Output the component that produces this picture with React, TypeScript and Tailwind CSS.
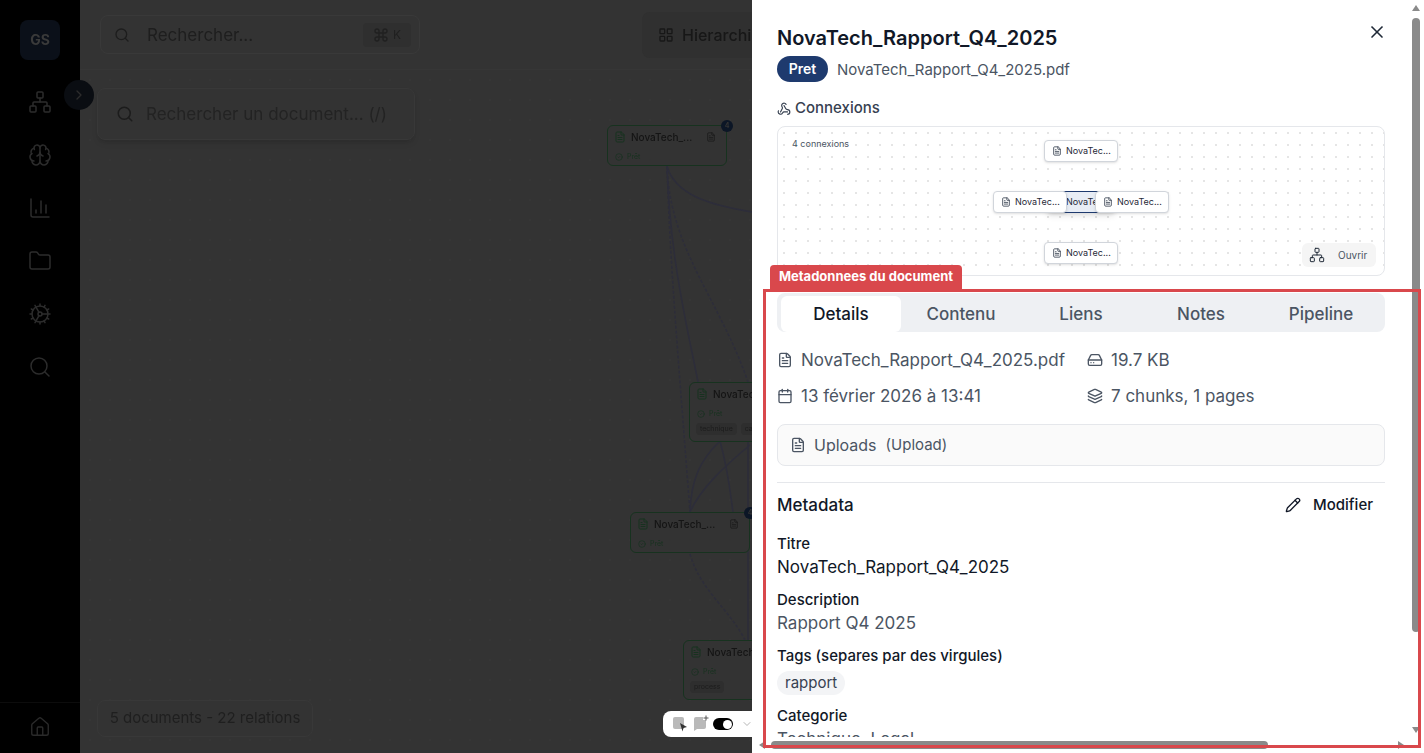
import { Brain, Calendar, ChartColumn, ChevronDown, ChevronRight, CircleCheck, Cog, Command, FileText, Folder, HardDrive, House, Layers, LayoutGrid, Network, Pencil, Search, Webhook, X } from "lucide-react"

const NAV_ICONS = [Network, Brain, ChartColumn, Folder, Cog, Search]
const TABS = ["Details", "Contenu", "Liens", "Notes", "Pipeline"]

function GraphNode({ className, tags, count }: { className: string; tags?: string[]; count?: boolean }) {
  return (
    <div className={`absolute w-[120px] rounded-md border-[1.5px] border-[#17321f] bg-[#333333] pb-[2px] pl-[6px] pr-[10px] pt-[3px] ${className}`}>
      <div className="flex h-4 items-center gap-[5px]">
        <FileText size={12} className="shrink-0 text-[#17321f]" />
        <span className="text-[10px] font-medium whitespace-nowrap text-[#141414]">NovaTech_...</span>
        <FileText size={10} className="ml-auto shrink-0 text-[#1c1c1c]" />
      </div>
      <div className="mt-[7px] flex items-center gap-1 pl-[1px] text-[7px] text-[#17321f]">
        <CircleCheck size={8} />
        <span>Prêt</span>
      </div>
      {tags && (
        <div className="mb-[4px] mt-[3px] flex gap-1">
          {tags.map(t => (
            <span key={t} className="rounded bg-[#2e2e2e] px-1 py-[1px] text-[7px] text-[#1c1c1c]">{t}</span>
          ))}
        </div>
      )}
      {count && (
        <span className="absolute -right-[7px] -top-[6px] flex h-3 w-3 items-center justify-center rounded-full bg-[#0c1626] text-[7px] font-bold text-[#333333]">4</span>
      )}
    </div>
  )
}

function MiniNode({ className }: { className: string }) {
  return (
    <div className={`absolute flex h-[22px] w-[74px] items-center gap-1 rounded border border-[#d1d5db] bg-white pl-[7px] shadow-sm ${className}`}>
      <FileText size={10} className="shrink-0 text-[#374151]" />
      <span className="text-[9px] text-[#1f2937]">NovaTec...</span>
    </div>
  )
}

function Field({ label, children, className = "mt-[10px]" }: { label: string; children: React.ReactNode; className?: string }) {
  return (
    <div className={className}>
      <div className="pt-px text-[15px] leading-5 font-medium text-[#111827]">{label}</div>
      <div className="mt-px">{children}</div>
    </div>
  )
}

function Background() {
  return (
    <div className="flex h-full w-[752px] shrink-0 blur-[0.6px]">
      <aside className="flex w-20 shrink-0 flex-col items-center bg-black">
        <div className="mt-5 flex h-10 w-10 items-center justify-center rounded-lg bg-[#0b1019] text-sm font-bold text-[#3a3a3a]">GS</div>
        <nav className="mt-[30px] flex flex-col gap-[29px]">
          {NAV_ICONS.map((Icon, i) => (
            <Icon key={i} size={24} strokeWidth={1.5} className="text-[#2c2c2c]" />
          ))}
        </nav>
        <div className="mt-auto flex h-[51px] w-full justify-center border-t border-[#0c0c0c] pt-[13px]">
          <House size={22} strokeWidth={1.5} className="text-[#2a2a2a]" />
        </div>
      </aside>

      <main className="relative min-w-0 flex-1 overflow-hidden bg-[#333333]">
        <header className="flex h-[70px] items-center border-b border-[#363636] pl-5">
          <div className="flex h-[39px] w-[320px] shrink-0 items-center rounded-lg border border-[#393939] pl-[13px] pr-2">
            <Search size={16} className="text-[#1d1d1d]" />
            <span className="ml-[17px] mt-[2px] text-[17px] text-[#1e1e1e]">Rechercher...</span>
            <span className="ml-auto flex h-6 w-12 items-center justify-center gap-1 rounded bg-[#2f2f2f] text-xs text-[#202020]">
              <Command size={16} />K
            </span>
          </div>
          <div className="ml-[222px] flex h-[46px] w-[200px] shrink-0 items-center gap-2 rounded-lg bg-[#303030] pl-[16px] text-base font-medium text-[#171717]">
            <LayoutGrid size={16} />
            Hierarchie
          </div>
        </header>

        <div className="absolute inset-x-0 bottom-0 top-[70px] bg-[radial-gradient(#363636_1px,transparent_1px)] bg-[size:20px_20px]" />

        <svg className="absolute inset-0" width="672" height="753" fill="none" stroke="#2d2d3a" strokeWidth="1.5">
          <path d="M587 166 C595 195 630 205 672 212" />
          <path d="M587 166 C590 250 640 300 668 382" strokeDasharray="3 2" />
          <path d="M587 166 C590 260 596 330 610 512" strokeDasharray="3 2" />
          <path d="M587 166 C590 260 608 330 618 382" />
          <path d="M640 441 C620 460 611 480 610 512" />
          <path d="M640 441 C648 470 650 490 653 512" />
          <path d="M670 445 C640 470 620 490 610 512" />
          <path d="M668 441 L668 640" />
          <path d="M610 554 C620 590 650 610 665 640" strokeDasharray="3 2" />
        </svg>

        <GraphNode className="left-[527px] top-[125px]" count />
        <GraphNode className="left-[609px] top-[382px]" tags={["technique", "cadre"]} />
        <GraphNode className="left-[550px] top-[512px]" count />
        <GraphNode className="left-[603px] top-[640px]" tags={["process"]} />

        <div className="absolute left-[17px] top-[88px] flex h-[52px] w-[318px] items-center rounded-lg border border-[#383838] bg-[#333333] pl-[18px] shadow-md">
          <Search size={18} className="text-[#1c1c1c]" />
          <span className="ml-[12px] mt-[2px] text-[17px] text-[#232323]">Rechercher un document... (/)</span>
        </div>

        <div className="absolute bottom-4 left-[17px] flex h-[37px] w-[216px] items-center justify-center rounded-lg border border-[#383838] bg-[#333333] text-[15px] text-[#1f1f1f]">
          5 documents - 22 relations
        </div>
      </main>
    </div>
  )
}

function DetailPanel() {
  return (
    <section className="relative h-full w-[672px] shrink-0 bg-white">
      <div className="h-[737px] overflow-hidden pl-[25px] pr-[39px] pt-[23px]">
        <h2 className="pt-px text-xl leading-7 font-semibold text-[#111827]">NovaTech_Rapport_Q4_2025</h2>
        <div className="mt-[4px] flex items-center gap-[9px]">
          <span className="flex h-[26px] w-[51px] items-center justify-center rounded-full bg-[#1e3a6e] text-sm font-semibold text-white">Pret</span>
          <span className="mt-[2px] text-[15px] text-[#4b5563]">NovaTech_Rapport_Q4_2025.pdf</span>
        </div>

        <div className="mt-4 flex h-5 items-center gap-1 pt-px text-[15px] font-medium text-[#374151]">
          <Webhook size={14} />
          Connexions
        </div>

        <div className="relative mt-2 h-[150px] overflow-hidden rounded-lg border border-[#e5e7eb] bg-white bg-[radial-gradient(#e5e5e5_1px,transparent_1px)] bg-[size:12px_12px]">
          <span className="absolute left-[14px] top-[10px] text-[9px] text-[#4b5563]">4 connexions</span>
          <MiniNode className="left-[266px] top-[13px]" />
          <div className="absolute left-[268px] top-[64px] flex h-[22px] w-[70px] items-center gap-[2px] overflow-hidden rounded border border-[#1e3a6e] bg-[#e8edf5] pl-[7px] shadow-md">
            <FileText size={10} className="shrink-0 text-[#374151]" />
            <span className="text-[9px] whitespace-nowrap text-[#1f2937]">NovaTech_R</span>
          </div>
          <MiniNode className="left-[215px] top-[64px]" />
          <MiniNode className="left-[317px] top-[64px]" />
          <MiniNode className="left-[266px] top-[115px]" />
          <div className="absolute bottom-2 right-2 flex h-6 w-[74px] items-center rounded-md bg-[#f5f5f5] pl-[7px] text-[10px] text-[#4b5563]">
            <Network size={16} strokeWidth={1.5} className="text-[#1f2937]" />
            <span className="ml-[13px]">Ouvrir</span>
          </div>
        </div>

        <div className="mt-[17px] flex h-[39px] rounded-lg bg-[#eef0f3] px-1 pt-[3px]">
          {TABS.map((t, i) => (
            <div key={t} className={`flex h-9 flex-1 items-center justify-center rounded-md pt-[2px] text-[17px] font-medium ${i === 0 ? "bg-white text-[#111827]" : "text-[#4b5563]"}`}>
              {t}
            </div>
          ))}
        </div>

        <div className="mt-4 grid grid-cols-2 gap-x-3 gap-y-3 text-[17px] leading-6 text-[#4b5563]">
          <div className="flex items-center gap-2"><FileText size={16} />NovaTech_Rapport_Q4_2025.pdf</div>
          <div className="flex items-center gap-2"><HardDrive size={16} />19.7 KB</div>
          <div className="flex items-center gap-2"><Calendar size={16} />13 février 2026 à 13:41</div>
          <div className="flex items-center gap-2"><Layers size={16} />7 chunks, 1 pages</div>
        </div>

        <div className="mt-4 flex h-[42px] items-center rounded-lg border border-[#e5e7eb] bg-[#fafafa] px-3 text-[#4b5563]">
          <FileText size={16} />
          <span className="ml-2 text-base">Uploads</span>
          <span className="ml-[9px] text-[15px]">(Upload)</span>
        </div>

        <div className="mt-4 border-t border-[#e5e7eb] pt-[10px]">
          <div className="flex h-6 items-center justify-between">
            <span className="pt-[2px] text-[17px] font-medium text-[#111827]">Metadata</span>
            <span className="flex items-center gap-3 pr-3 text-[15px] font-medium text-[#111827]"><Pencil size={16} />Modifier</span>
          </div>
          <Field label="Titre" className="mt-[16px]"><div className="text-[17px] leading-6 text-[#111827]">NovaTech_Rapport_Q4_2025</div></Field>
          <Field label="Description"><div className="text-[17px] leading-6 text-[#4b5563]">Rapport Q4 2025</div></Field>
          <Field label="Tags (separes par des virgules)">
            <span className="mt-1 inline-flex h-6 items-center rounded-full bg-[#f3f4f6] px-2 text-[15px] text-[#374151]">rapport</span>
          </Field>
          <Field label="Categorie"><div className="text-[17px] leading-6 text-[#4b5563]">Technique, Legal</div></Field>
        </div>
      </div>

      <X size={20} className="absolute right-[37px] top-[22px] text-[#1f2937]" />
    </section>
  )
}

function Scrollbars() {
  return (
    <>
      <div className="absolute left-[1412px] top-[18px] h-[614px] w-2 rounded-full bg-[#8a8a8a]" />
      <div className="absolute left-[1412px] top-[5px] h-0 w-0 border-x-4 border-b-[6px] border-x-transparent border-b-[#8a8a8a]" />
      <div className="absolute left-[1412px] top-[727px] h-0 w-0 border-x-4 border-t-[6px] border-x-transparent border-t-[#8a8a8a]" />
      <div className="absolute left-[771px] top-[741px] h-2 w-[497px] rounded-full bg-[#8a8a8a]" />
      <div className="absolute left-[759px] top-[741px] h-0 w-0 border-y-4 border-r-[6px] border-y-transparent border-r-[#8a8a8a]" />
      <div className="absolute left-[1398px] top-[741px] h-0 w-0 border-y-4 border-l-[6px] border-y-transparent border-l-[#8a8a8a]" />
    </>
  )
}

export default function App() {
  return (
    <div className="relative flex h-[753px] w-[1424px] overflow-hidden bg-white font-['Inter',sans-serif]">
      <Background />
      <DetailPanel />

      <button className="absolute left-[64px] top-[80px] flex h-[30px] w-[30px] items-center justify-center rounded-full bg-[#0a0d12] text-[#2c2c2c]">
        <ChevronRight size={16} />
      </button>

      {/* dev toolbar floating over the page */}
      <div className="absolute left-[663px] top-[711px] flex h-[26px] w-[97px] items-center rounded-lg bg-white pl-2">
        <svg width="18" height="18" viewBox="0 0 18 18">
          <rect x="2" y="2" width="11" height="12" rx="2" fill="#b9b9b9" />
          <path d="M9 8 L16 12 L12.5 13 L11.5 16.5 Z" fill="#333" />
        </svg>
        <svg width="18" height="18" viewBox="0 0 18 18" className="ml-[3px]">
          <path d="M2 4 a2 2 0 0 1 2-2 h7 v3 h3 v7 a2 2 0 0 1-2 2 h-7 l-3 2 Z" fill="#b9b9b9" />
          <path d="M14 0.5 v5 M11.5 3 h5" stroke="#555" strokeWidth="1" />
        </svg>
        <span className="ml-[3px] flex h-3 w-5 items-center justify-end rounded-full bg-black pr-[1px]">
          <span className="h-[9px] w-[9px] rounded-full bg-white" />
        </span>
        <ChevronDown size={12} className="ml-2 text-[#b5b5b5]" />
      </div>

      <Scrollbars />

      {/* annotation over the metadata region */}
      <div className="pointer-events-none absolute left-[763px] top-[289px] h-[459px] w-[658px] border-[3px] border-[#d9484c]" />
      <div className="absolute left-[770px] top-[265px] flex h-6 w-[192px] items-center justify-center rounded-t-sm bg-[#d9484c] text-[13px] font-bold text-white">
        Metadonnees du document
      </div>
    </div>
  )
}
